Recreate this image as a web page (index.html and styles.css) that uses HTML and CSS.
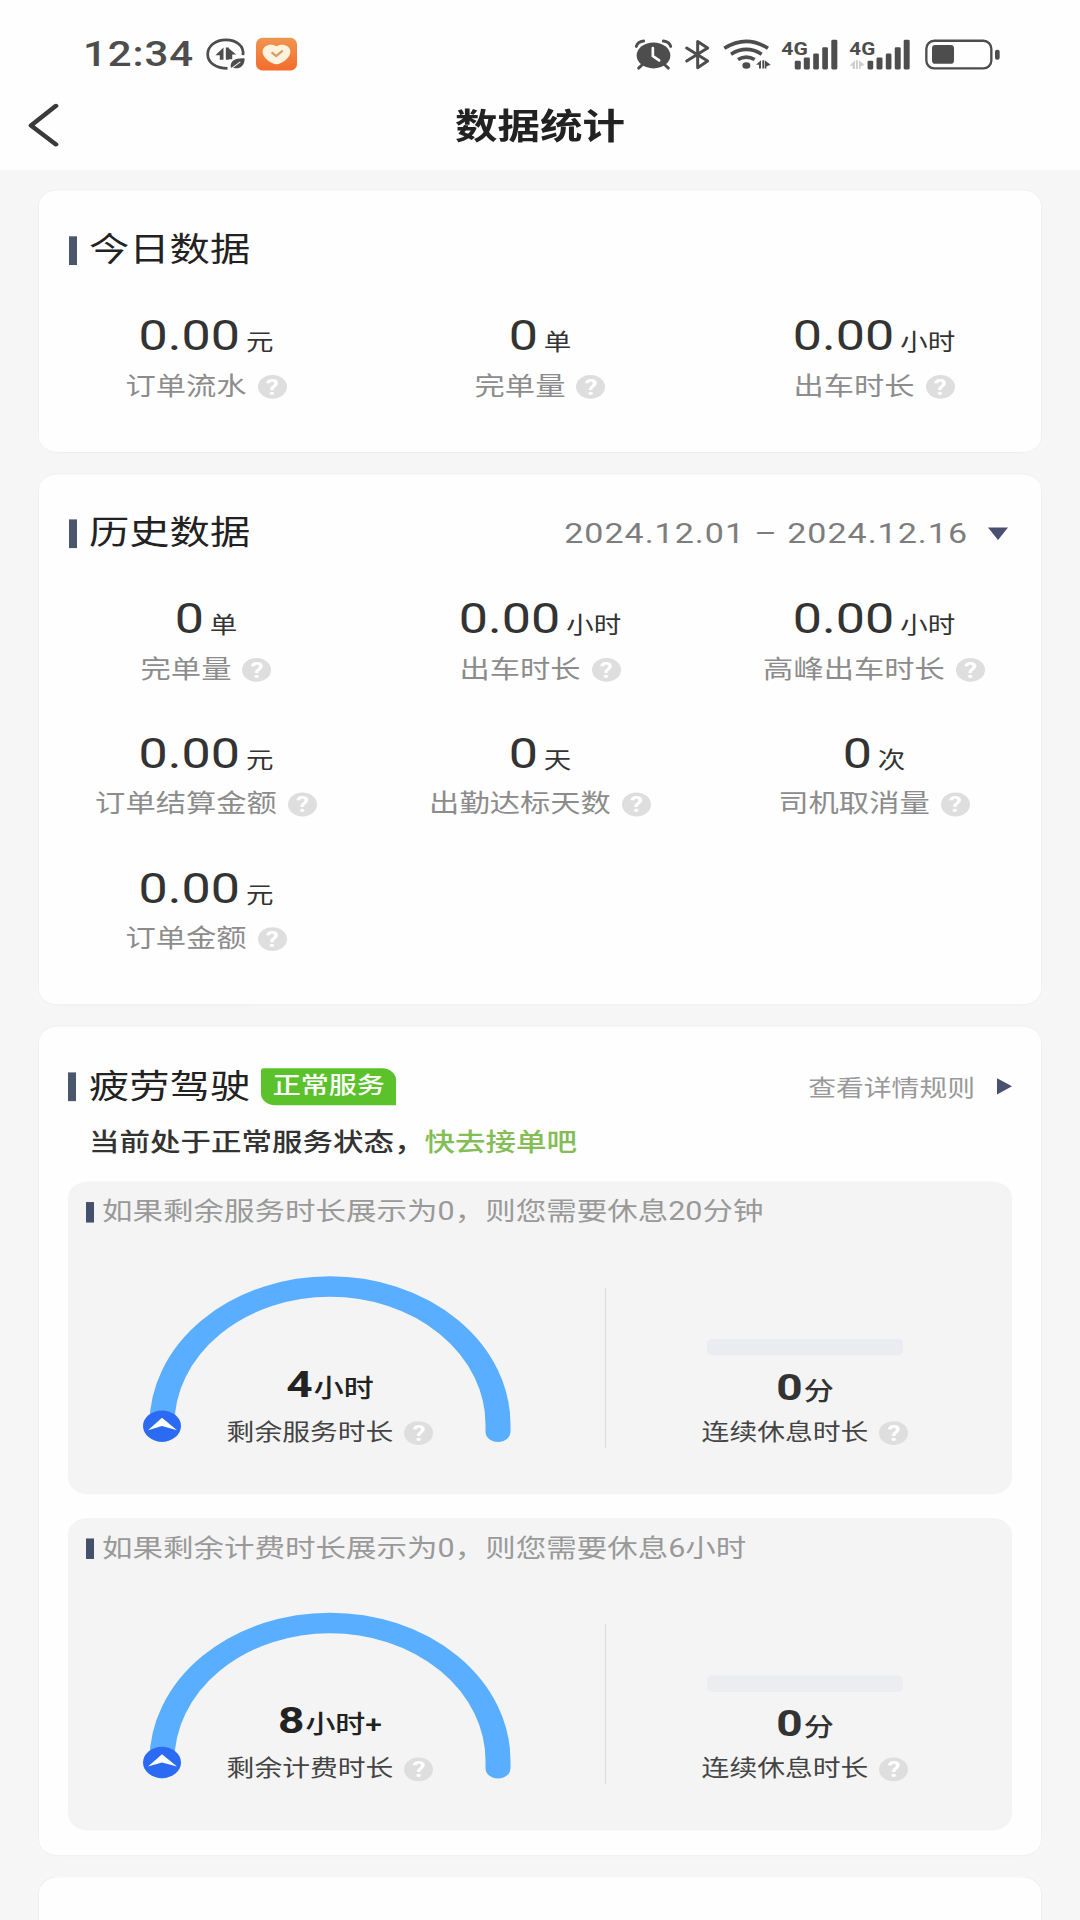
FILE: index.html
```html
<!DOCTYPE html>
<html lang="zh-CN">
<head>
  <meta charset="UTF-8">
  <meta name="viewport" content="width=device-width, initial-scale=1.0">
  <title>数据统计</title>
  <link rel="stylesheet" href="styles.css">
</head>
<body>
<div class="page">

<header class="header">
  <div class="status-bar">
    <span class="time">12:34</span>
    <svg class="icon-saver" viewBox="438 58 116 94" preserveAspectRatio="none">
      <path d="M548 108C552 80 528 62 497 62C466 62 443 81 443 105C443 130 467 148 502 148" fill="none" stroke="#4d4d4d" stroke-width="8"/>
      <path d="M466 108L490 85V122H479V108ZM497 85H506V122H497ZM506 88L528 106H516V120H506Z" fill="#4d4d4d"/>
      <path d="M512 146C508 124 528 116 553 118C553 142 536 152 519 146Z" fill="#4d4d4d"/>
      <path d="M511 150L540 128" stroke="#fff" stroke-width="3"/>
    </svg>
    <svg class="icon-heart" viewBox="588 54 124 99" preserveAspectRatio="none">
      <defs>
        <linearGradient id="orange" x1="0" y1="0" x2="0" y2="1">
          <stop offset="0" stop-color="#ee9650"/>
          <stop offset="1" stop-color="#f56c2c"/>
        </linearGradient>
      </defs>
      <rect x="588" y="54" width="124" height="99" rx="20" fill="url(#orange)"/>
      <path d="M650 80C638 70 608 74 608 96C608 114 634 133 650 134C666 133 692 114 692 96C692 74 662 70 650 80Z" fill="#fff3e0"/>
      <path d="M635 98L649 109L669 93" fill="none" stroke="#d2a262" stroke-width="7"/>
    </svg>

    <div class="status-right">
      <svg class="icon-alarm" viewBox="44 58 112 91" preserveAspectRatio="none" fill="none" stroke="#4d4d4d" stroke-linecap="round">
        <ellipse cx="100" cy="106" rx="51" ry="39" fill="#4d4d4d" stroke="none"/>
        <path d="M48 79Q52 65 70 63M152 79Q148 65 130 63" stroke-width="9"/>
        <path d="M66 134L55 144M134 134L145 144" stroke-width="9"/>
        <path d="M98 84V108L117 121" stroke="#fff" stroke-width="8"/>
      </svg>
      <svg class="icon-bluetooth" viewBox="196 58 75 91" preserveAspectRatio="none">
        <path d="M201 84L264 123L234 143V64L264 84L201 123" fill="none" stroke="#4d4d4d" stroke-width="9" stroke-linecap="round" stroke-linejoin="round"/>
      </svg>
      <svg class="icon-wifi" viewBox="310 56 144 92" preserveAspectRatio="none" fill="none" stroke="#4d4d4d" stroke-width="11">
        <path d="M314 83Q380 41 445 83M334 101Q380 72 426 101M355 117Q380 102 405 117"/>
        <ellipse cx="380" cy="135" rx="12" ry="10" fill="#4d4d4d" stroke="none"/>
        <path d="M409 133L424 119V144H418V133ZM428 119H434V144H428ZM436 144V120L453 133L440 138V144Z" fill="#4d4d4d" stroke="none"/>
      </svg>
      <svg class="icon-signal" viewBox="484 56 170 92" preserveAspectRatio="none" fill="#4d4d4d">
        <text x="485" y="102" textLength="79" lengthAdjust="spacingAndGlyphs" class="net">4G</text>
        <rect x="525" y="121" width="18" height="26" rx="4"/>
        <rect x="552" y="111" width="18" height="36" rx="4"/>
        <rect x="580" y="99" width="17" height="48" rx="4"/>
        <rect x="607" y="80" width="17" height="67" rx="4"/>
        <rect x="634" y="57" width="18" height="90" rx="4"/>
      </svg>
      <svg class="icon-signal second" viewBox="687 56 184 92" preserveAspectRatio="none" fill="#4d4d4d">
        <text x="688" y="102" textLength="78" lengthAdjust="spacingAndGlyphs" class="net">4G</text>
        <path d="M689 136L705 119V146H698V136ZM708 119H714V146H708ZM717 119L734 133L722 138V146H717Z" fill="#cfcfcf"/>
        <rect x="743" y="121" width="17" height="26" rx="4"/>
        <rect x="770" y="111" width="18" height="36" rx="4"/>
        <rect x="798" y="99" width="17" height="48" rx="4"/>
        <rect x="825" y="80" width="18" height="67" rx="4"/>
        <rect x="852" y="57" width="18" height="90" rx="4"/>
      </svg>
      <svg class="icon-battery" viewBox="915 56 225 91" preserveAspectRatio="none">
        <rect x="919" y="60" width="195" height="83" rx="24" fill="none" stroke="#4d4d4d" stroke-width="7"/>
        <rect x="936" y="73" width="66" height="56" rx="10" fill="#4d4d4d"/>
        <rect x="1125" y="87" width="14" height="30" rx="6" fill="#4d4d4d"/>
      </svg>
    </div>
  </div>

  <div class="nav">
    <svg class="back" viewBox="0 0 34 56">
      <path d="M29 4L4 28L29 51" fill="none" stroke="#3a3a3a" stroke-width="5" stroke-linecap="round" stroke-linejoin="round"/>
    </svg>
    <h1>数据统计</h1>
  </div>
</header>

<main>
  <!-- 今日数据 -->
  <section class="card today">
    <div class="card-head">
      <h2>今日数据</h2>
    </div>
    <div class="stats">
      <div class="stat">
        <div class="value">0.00<small>元</small></div>
        <div class="label">订单流水<i class="help">?</i></div>
      </div>
      <div class="stat">
        <div class="value">0<small>单</small></div>
        <div class="label">完单量<i class="help">?</i></div>
      </div>
      <div class="stat">
        <div class="value">0.00<small>小时</small></div>
        <div class="label">出车时长<i class="help">?</i></div>
      </div>
    </div>
  </section>

  <!-- 历史数据 -->
  <section class="card history">
    <div class="card-head">
      <h2>历史数据</h2>
      <div class="date">2024.12.01 – 2024.12.16<span class="caret-down"></span></div>
    </div>
    <div class="stats">
      <div class="stat">
        <div class="value">0<small>单</small></div>
        <div class="label">完单量<i class="help">?</i></div>
      </div>
      <div class="stat">
        <div class="value">0.00<small>小时</small></div>
        <div class="label">出车时长<i class="help">?</i></div>
      </div>
      <div class="stat">
        <div class="value">0.00<small>小时</small></div>
        <div class="label">高峰出车时长<i class="help">?</i></div>
      </div>
      <div class="stat">
        <div class="value">0.00<small>元</small></div>
        <div class="label">订单结算金额<i class="help">?</i></div>
      </div>
      <div class="stat">
        <div class="value">0<small>天</small></div>
        <div class="label">出勤达标天数<i class="help">?</i></div>
      </div>
      <div class="stat">
        <div class="value">0<small>次</small></div>
        <div class="label">司机取消量<i class="help">?</i></div>
      </div>
      <div class="stat">
        <div class="value">0.00<small>元</small></div>
        <div class="label">订单金额<i class="help">?</i></div>
      </div>
    </div>
  </section>

  <!-- 疲劳驾驶 -->
  <section class="card fatigue">
    <div class="card-head">
      <h2>疲劳驾驶</h2>
      <span class="badge">正常服务</span>
      <div class="rules">查看详情规则<span class="caret-right"></span></div>
    </div>
    <p class="state">当前处于正常服务状态，<a>快去接单吧</a></p>

    <div class="panel">
      <h3>如果剩余服务时长展示为0，则您需要休息20分钟</h3>
      <div class="panel-body">
        <div class="gauge">
          <svg class="arc" viewBox="0 0 380 216">
            <path d="M22 196V187A168 168 0 0 1 358 187V196" fill="none" stroke="#5aaeff" stroke-width="25" stroke-linecap="round"/>
            <circle cx="22" cy="189" r="19" fill="#2b6af3"/>
            <path d="M8 194L22 179L37 194L22 189Z" fill="#fff"/>
          </svg>
          <div class="gauge-text">
            <div class="amount">4<small>小时</small></div>
            <div class="label">剩余服务时长<i class="help">?</i></div>
          </div>
        </div>
        <div class="divider"></div>
        <div class="rest">
          <div class="track"></div>
          <div class="amount">0<small>分</small></div>
          <div class="label">连续休息时长<i class="help">?</i></div>
        </div>
      </div>
    </div>

    <div class="panel">
      <h3>如果剩余计费时长展示为0，则您需要休息6小时</h3>
      <div class="panel-body">
        <div class="gauge">
          <svg class="arc" viewBox="0 0 380 216">
            <path d="M22 196V187A168 168 0 0 1 358 187V196" fill="none" stroke="#5aaeff" stroke-width="25" stroke-linecap="round"/>
            <circle cx="22" cy="189" r="19" fill="#2b6af3"/>
            <path d="M8 194L22 179L37 194L22 189Z" fill="#fff"/>
          </svg>
          <div class="gauge-text">
            <div class="amount">8<small>小时+</small></div>
            <div class="label">剩余计费时长<i class="help">?</i></div>
          </div>
        </div>
        <div class="divider"></div>
        <div class="rest">
          <div class="track gray"></div>
          <div class="amount">0<small>分</small></div>
          <div class="label">连续休息时长<i class="help">?</i></div>
        </div>
      </div>
    </div>
  </section>

  <section class="card next"></section>
</main>

</div>
</body>
</html>
```

FILE: styles.css
```css
* {
  box-sizing: border-box;
}

html, body {
  margin: 0;
  height: 1920px;
  overflow: hidden;
  background: #f6f6f6;
}

/* 1080x2340 phone layout fitted to a 1920px high screen */
.page {
  width: 1080px;
  height: 2340px;
  margin-bottom: -420px;
  overflow: hidden;
  transform: scaleY(0.820513);
  transform-origin: 0 0;
  font-family: Roboto, "Noto Sans CJK SC", sans-serif;
  color: #222;
}

h1, h2, h3, p {
  margin: 0;
  font-weight: 400;
}

svg {
  display: block;
  flex: none;
  overflow: visible;
}

/* header */
.header {
  height: 207px;
  background: #fefefe;
}

.status-bar {
  display: flex;
  align-items: center;
  height: 132px;
  padding: 0 80px 0 83px;
}

.time {
  width: 123px;
  font-size: 42px;
  font-weight: 500;
  letter-spacing: 0.9px;
  color: #4d4d4d;
}

.icon-saver {
  width: 39px;
  height: 38px;
}

.icon-heart {
  width: 41px;
  height: 40px;
  margin-left: 11px;
}

.status-right {
  display: flex;
  align-items: center;
  margin-left: auto;
}

.icon-alarm {
  width: 37px;
  height: 37px;
}

.icon-bluetooth {
  width: 25px;
  height: 37px;
  margin-left: 13px;
}

.icon-wifi {
  width: 48px;
  height: 37px;
  margin-left: 13px;
}

.icon-signal {
  width: 57px;
  height: 37px;
  margin-left: 10px;
}

.icon-signal.second {
  width: 61px;
  margin-left: 11px;
}

.icon-battery {
  width: 75px;
  height: 37px;
  margin-left: 15px;
}

.net {
  font-size: 58px;
  font-weight: 700;
}

.nav {
  position: relative;
  display: flex;
  justify-content: center;
  height: 46px;
  align-items: center;
}

.back {
  position: absolute;
  left: 27px;
  top: -7px;
  width: 34px;
  height: 56px;
}

h1 {
  font-size: 42.5px;
  font-weight: 700;
  line-height: 46px;
}

/* cards */
main {
  display: flex;
  flex-direction: column;
  gap: 25px;
  height: 2133px;
  padding: 24px 38px 0 38px;
}

.card {
  flex: none;
  border: 1px solid #eee;
  border-radius: 20px;
  background: #fefefe;
}

.card.today {
  height: 321px;
  padding-top: 1px;
}

.card.history {
  height: 648px;
}

.card-head {
  display: flex;
  align-items: center;
  height: 144px;
  padding: 0 33px 0 30px;
}

h2 {
  display: flex;
  align-items: center;
  font-size: 40.3px;
  line-height: 50px;
}

h2::before {
  content: "";
  width: 8px;
  height: 35px;
  margin-right: 12px;
  background: #4a566b;
}

.date {
  display: flex;
  align-items: center;
  margin-left: auto;
  font-size: 34px;
  letter-spacing: 1px;
  color: #7d7d7d;
}

.caret-down {
  margin-left: 20px;
  border: 10px solid transparent;
  border-top: 15px solid #4a5070;
  border-bottom: 0;
}

.stats {
  display: grid;
  grid-template-columns: repeat(3, 1fr);
  row-gap: 52px;
  padding-top: 2px;
}

.stat {
  text-align: center;
}

.value {
  height: 60px;
  margin-bottom: 12px;
  font-size: 52px;
  line-height: 61px;
  color: #333;
}

.value small {
  margin-left: 6px;
  font-size: 27.5px;
}

.label {
  display: flex;
  align-items: center;
  justify-content: center;
  height: 40px;
  font-size: 30.3px;
  line-height: 40px;
  color: #8c8c8c;
}

.help {
  width: 29px;
  height: 29px;
  margin-left: 11px;
  border-radius: 50%;
  background: #dedede;
  color: #fff;
  font-size: 26px;
  font-style: normal;
  font-weight: 700;
  line-height: 30px;
  text-align: center;
}

/* fatigue driving */
.card.fatigue {
  height: 1012px;
  padding: 0 29px;
}

.fatigue .card-head {
  height: 147px;
  padding: 0;
}

.fatigue h2::before {
  margin-right: 13px;
}

.badge {
  width: 135px;
  height: 45px;
  margin-left: 11px;
  border-radius: 3px 14px 0 14px;
  background: #5bc22c;
  color: #fff;
  font-size: 28px;
  font-weight: 500;
  line-height: 42px;
  text-align: center;
}

.rules {
  display: flex;
  align-items: center;
  margin: 0 0 2px auto;
  font-size: 27.8px;
  color: #999;
}

.caret-right {
  margin-left: 22px;
  border: 10px solid transparent;
  border-left: 15px solid #4a5070;
  border-right: 0;
}

.state {
  height: 42px;
  margin: -26px 0 26px 21px;
  font-size: 30.5px;
  font-weight: 500;
  line-height: 42px;
  color: #333;
}

.state a {
  color: #84bd55;
}

.panel {
  height: 381px;
  margin-bottom: 29px;
  padding-top: 16px;
  border-radius: 20px;
  background: #f4f4f4;
}

h3 {
  display: flex;
  align-items: center;
  height: 42px;
  padding-left: 18px;
  font-size: 30.5px;
  line-height: 42px;
  color: #999;
}

h3::before {
  content: "";
  width: 8px;
  height: 25px;
  margin-right: 8px;
  background: #45506b;
}

.panel-body {
  display: flex;
  padding-top: 51px;
}

.gauge {
  position: relative;
  width: 524px;
  height: 216px;
}

.arc {
  width: 380px;
  height: 216px;
  margin-left: 72px;
}

/* text sits inside the arc */
.gauge-text {
  position: absolute;
  left: 0;
  right: 0;
  top: 107px;
}

.amount {
  height: 60px;
  font-size: 46px;
  font-weight: 700;
  line-height: 60px;
  text-align: center;
  color: #222;
}

.amount small {
  margin-left: 1px;
  font-size: 30px;
  font-weight: 500;
}

.panel .label {
  margin-top: 10px;
  font-size: 27.8px;
  color: #444;
}

.divider {
  width: 1px;
  height: 196px;
  margin: 20px 0 0 13px;
  background: #ddd;
}

.rest {
  width: 398px;
  padding-top: 83px;
}

.rest .amount {
  height: 58px;
  margin-top: 8px;
  color: #333;
}

.rest .label {
  margin-top: 8px;
}

.track {
  width: 196px;
  height: 20px;
  margin: 0 auto;
  border-radius: 5px;
  background: #ebecf2;
}

.track.gray {
  background: #ebedf0;
}

.card.next {
  height: 80px;
  border-bottom: 0;
  border-radius: 20px 20px 0 0;
}
```
